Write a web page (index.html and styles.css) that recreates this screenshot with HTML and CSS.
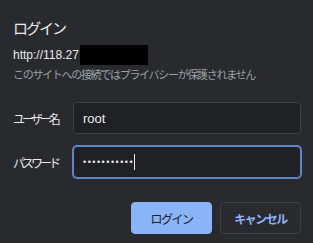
FILE: index.html
```html
<!DOCTYPE html>
<html>
<head lang="ja">
    <meta charset="UTF-8">
    <title>ログイン</title>
    <link rel="stylesheet" href="styles.css">
</head>
<body>
<div class="dialog">
    <h1 class="title">ログイン</h1>
    <div class="origin">
        <span class="url">http://118.27</span><span class="mask"></span>
    </div>
    <p class="warn">このサイトへの接続ではプライバシーが保護されません</p>

    <div class="form">
        <label class="label">ユーザー名</label>
        <div class="field">root</div>
        <label class="label">パスワード</label>
        <div class="field focus"><span class="dots">•••••••••••</span><i class="caret"></i></div>
    </div>

    <div class="actions">
        <button class="btn primary">ログイン</button>
        <button class="btn">キャンセル</button>
    </div>
</div>
</body>
</html>
```

FILE: styles.css
```css
* {
    margin: 0;
    padding: 0;
    box-sizing: border-box;
}

body {
    background: #292a2d;
    color: #e8eaed;
    font-family: "Noto Sans CJK JP", "Liberation Sans", sans-serif;
}

.dialog {
    width: 313px;
    height: 243px;
    padding: 18px 12px 0 13px;
}

.title {
    font-size: 15px;
    font-weight: normal;
    line-height: 20px;
    height: 20px;
    letter-spacing: -2px;
}

.origin {
    display: flex;
    align-items: center;
    height: 20px;
    margin-top: 7px;
}

.url {
    font-family: "Liberation Sans", sans-serif;
    font-size: 12px;
    color: #e8eaed;
}

.mask {
    display: inline-block;
    width: 68px;
    height: 20px;
    margin-left: 1px;
    background: #000;
}

.warn {
    font-size: 11px;
    line-height: 18px;
    color: #9aa0a6;
    letter-spacing: -1.3px;
}

.form {
    display: grid;
    grid-template-columns: 60px 228px;
    row-gap: 12px;
    align-items: center;
    margin-top: 19px;
}

.label {
    font-size: 12px;
    letter-spacing: -3px;
    color: #e8eaed;
}

.field {
    display: flex;
    align-items: center;
    height: 32px;
    padding: 0 9px;
    background: #202124;
    border: 1px solid #3c4043;
    border-radius: 4px;
    font-family: "Liberation Sans", sans-serif;
    font-size: 13px;
}

.field.focus {
    border-color: #5b86cc;
    box-shadow: 0 0 0 1px #5b86cc;
}

.dots {
    font-size: 9px;
    letter-spacing: 1.5px;
}

.caret {
    display: inline-block;
    width: 1px;
    height: 16px;
    background: #e8eaed;
}

.actions {
    display: flex;
    justify-content: flex-end;
    gap: 8px;
    margin-top: 24px;
}

.btn {
    width: 81px;
    height: 32px;
    border: 1px solid #3c4043;
    border-radius: 4px;
    background: transparent;
    color: #8ab4f8;
    font-family: "Noto Sans CJK JP", sans-serif;
    font-size: 12px;
    font-weight: bold;
    letter-spacing: -1.5px;
}

.btn.primary {
    background: #8ab4f8;
    border-color: #8ab4f8;
    color: #202124;
    font-weight: normal;
}
```
